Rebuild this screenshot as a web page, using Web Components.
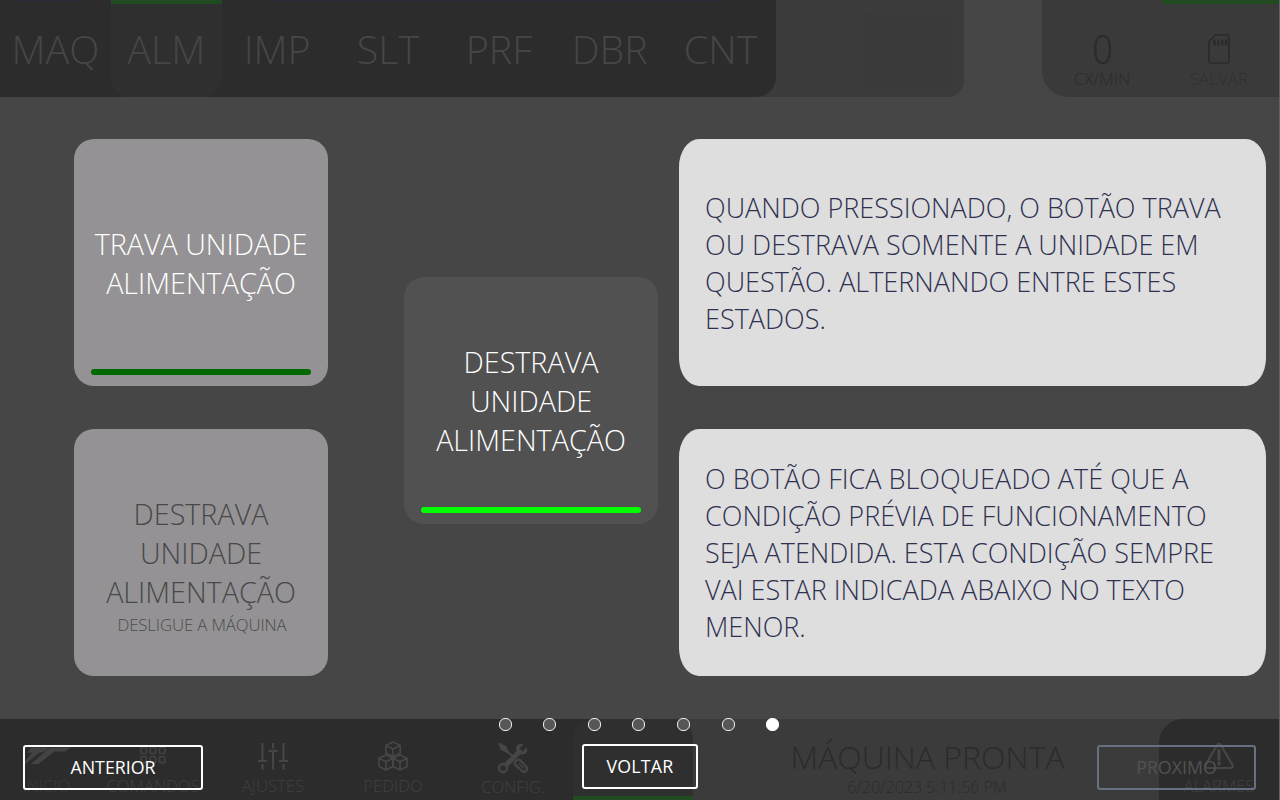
<!DOCTYPE html>
<html lang="pt-BR">
<head>
<meta charset="utf-8">
<title>Ajuda - Alimentação</title>
<style>
html, body { margin: 0; height: 100%; background: #464646; overflow: hidden; }
body { font-family: "Open Sans", "Noto Sans", sans-serif; font-weight: 300; }
</style>
</head>
<body>
<hmi-app></hmi-app>
<script>
function define(name, html, setup) {
  const tpl = document.createElement('template');
  tpl.innerHTML = html;
  customElements.define(name, class extends HTMLElement {
    constructor() {
      super();
      this.attachShadow({ mode: 'open' }).append(tpl.content.cloneNode(true));
    }
    connectedCallback() { if (setup) setup(this, this.shadowRoot); }
  });
}

/* Line icons used in the bars */
const ICONS = {
  logo: [50, 30, '<g fill="#434343"><path d="M9 6.500H27.500L20.500 11.500H17.500L3.500 23H0.500L10.500 11.500L5 12Z"/><path d="M28.500 6.500H49L43 10.500H32.500L16.500 23H9L25 9Z"/></g>'],
  grid: [26, 30, '<g fill="none" stroke="#414141" stroke-width="1.700"><rect x="1" y="6.500" width="5.500" height="6" rx="1"/><rect x="10.200" y="6.500" width="5.500" height="6" rx="1"/><rect x="19.400" y="6.500" width="5.500" height="6" rx="1"/><rect x="1" y="15.700" width="5.500" height="6" rx="1"/><rect x="10.200" y="15.700" width="5.500" height="6" rx="1"/><rect x="19.400" y="15.700" width="5.500" height="6" rx="1"/></g>'],
  sliders: [30, 30, '<g fill="none" stroke="#464646" stroke-width="2"><path d="M4.500 2V20M0 20H9M4.500 23V28.500M15 2V7.500M10.500 10H19.500M15 10V28.500M25.500 2V20M21 20H30M25.500 23V28.500"/></g>'],
  cubes: [30, 30, '<g fill="none" stroke="#464646" stroke-width="1.700" stroke-linejoin="round"><path d="M15 1L22.200 4.500V12L15 15.500L7.800 12V4.500ZM7.800 4.500L15 8L22.200 4.500M15 8V15.500"/><path d="M8 14L15 17.200V25.500L8 29L1 25.500V17.200ZM1 17.200L8 20.700L15 17.200M8 20.700V29"/><path d="M22 14L29 17.200V25.500L22 29L15 25.500V17.200ZM15 17.200L22 20.700L29 17.200M22 20.700V29"/></g>'],
  tools: [32, 32, '<path d="M1.500 1.500L8.500 5L10.500 9.500L18 17" fill="none" stroke="#464646" stroke-width="2.200"/><path d="M1 1L8 4L11 10L9.500 11L4 8Z" fill="#464646"/><path d="M17.500 20.500L20.500 17.500L23.500 18.500L29.500 25Q31 27 29 29Q27 30.500 25 29L18.500 23Z" fill="none" stroke="#464646" stroke-width="2.200"/><path d="M22 21.500L27 26.500" stroke="#464646" stroke-width="1.500"/><path d="M8.500 23.500L23 9" stroke="#464646" stroke-width="5"/><path d="M29.800 5.500L25.500 9.300L22.500 6.500L26.500 2Q22 .8 19.800 4Q18.500 6 19.500 9L22.500 12Q26 13.500 29 11.200Q31 9 29.800 5.500Z" fill="#464646"/><circle cx="6" cy="26" r="4" fill="#2c2c2c" stroke="#464646" stroke-width="2.300"/>'],
  warning: [32, 30, '<path d="M16 2.500Q17 2.500 17.700 3.800L29.500 24Q30.500 26.800 27.500 27H4.500Q1.500 26.800 2.500 24L14.300 3.800Q15 2.500 16 2.500Z" fill="none" stroke="#464646" stroke-width="2.200"/><path d="M16 9.500V18.500" stroke="#464646" stroke-width="3" stroke-linecap="round"/><circle cx="16" cy="22.500" r="1.900" fill="#464646"/>'],
  card: [22, 30, '<path d="M7 1H19.500Q21 1 21 2.500V27.500Q21 29 19.500 29H2.500Q1 29 1 27.500V7.500Z" fill="none" stroke="#2b2b2b" stroke-width="1.700" stroke-linejoin="round"/><path d="M6.500 5.500V11.500M10.500 5.500V11.500M14.300 5.500V11.500M18 5.500V11.500" stroke="#2b2b2b" stroke-width="2.300"/>']
};

define('hmi-icon', `<style>:host{display:block}svg{display:block}</style>`, (el, root) => {
  const [w, h, body] = ICONS[el.getAttribute('name')];
  root.innerHTML += `<svg width="${w}" height="${h}" viewBox="0 0 ${w} ${h}">${body}</svg>`;
});

define('hmi-tab', `
<style>
:host { display: flex; flex: 1; justify-content: center; box-sizing: border-box; height: 97px; padding-top: 22px;
  font-size: 39.400px; line-height: 55px; color: #464646; border-radius: 0 0 20px 20px; }
:host([active]) { background: linear-gradient(#204a20 4px, #2f2f2f 4px); }
:host([mark]) { background: linear-gradient(#242a3a 1px, transparent 1px); border-radius: 0; }
:host([mark=first]) { background: linear-gradient(#242a3a, #242a3a) 18px 0 / 64px 1px no-repeat; }
:host([mark=last]) { background: linear-gradient(#242a3a, #242a3a) 0 0 / 56px 1px no-repeat; }
:host([mark=start]) { background: linear-gradient(#242a3a, #242a3a) 53px 0 / 58px 1px no-repeat; }
</style><slot></slot>`);

define('hmi-header', `
<style>
:host { display: grid; grid-template-columns: 964px 1fr 237px; height: 97px; }
.left { display: grid; grid-template-columns: 776px 1fr; background: #3b3b3b; border-radius: 0 0 16px 0; }
.tabs { display: flex; background: #2c2c2c; border-radius: 0 0 20px 0; }
.display { margin: 14px 10px 8px 88px; background: linear-gradient(90deg, #3a3a3a, #393939 6px, #3b3b3b 16px, #3a3a3a 18px); }
.right { grid-column: 3; display: grid; grid-template-columns: 120px 1fr; background: linear-gradient(#204a20, #204a20) 120px 0 / 117px 4px no-repeat #3a3a3a; border-radius: 0 0 0 26px; text-align: center; }
.cell { display: flex; flex-direction: column; align-items: center; color: #2b2b2b; font-size: 17px; line-height: 23px; }
.num { font-size: 40px; line-height: 37px; height: 37px; margin-top: 30px; transform: scaleX(.9); -webkit-text-stroke: .4px #2b2b2b; }
.save { color: #303030; }
.save hmi-icon { margin: 34px 4px 3px 0; }
.save span { margin-right: 3px; }
</style>
<div class="left">
  <div class="tabs">
    <hmi-tab mark="first">MAQ</hmi-tab><hmi-tab active>ALM</hmi-tab><hmi-tab mark="start">IMP</hmi-tab><hmi-tab mark>SLT</hmi-tab><hmi-tab mark>PRF</hmi-tab><hmi-tab mark>DBR</hmi-tab><hmi-tab mark="last">CNT</hmi-tab>
  </div>
  <div class="display"></div>
</div>
<div class="right">
  <div class="cell"><div class="num">0</div><span>CX/MIN</span></div>
  <div class="cell save"><hmi-icon name="card"></hmi-icon><span>SALVAR</span></div>
</div>`);

define('hmi-command', `
<style>
:host { display: grid; grid-template-rows: 1fr auto 1fr; justify-items: center; width: 254px; height: 247px; border-radius: 20px;
  background: #949294; color: #fff; font-size: 28.700px; line-height: 39px; text-align: center; --bar: #006a00; }
:host([tone=dark]) { background: #515151; --bar: #00ff00; }
:host([disabled]) { color: #484848; --bar: transparent; }
.label { grid-row: 2; white-space: pre-line; }
.foot { grid-row: 3; display: flex; flex-direction: column; justify-content: space-between; align-items: center; }
.note { padding: 2px 0 0 2px; font-size: 16.800px; line-height: 23px; letter-spacing: -.12px; color: #4c4c4c; }
.bar { width: 220px; height: 6px; margin-bottom: 11px; border-radius: 3px; background: var(--bar); }
</style>
<div class="label"><slot></slot></div>
<div class="foot"><div class="note"><slot name="note"></slot></div><div class="bar"></div></div>`);

define('hmi-note', `
<style>
:host { display: flex; align-items: center; box-sizing: border-box; height: 247px; padding-left: 26px; border-radius: 20px / 28px;
  background: #dedede; color: #2f3150; font-size: 27px; line-height: 37px; white-space: nowrap; }
</style><div><slot></slot></div>`);

define('hmi-help', `
<style>
:host { display: grid; grid-template-columns: 254px 254px 587px; padding: 42px 0 0 74px; align-items: start; }
.col { display: grid; row-gap: 43px; }
:host { grid-template-columns: 330px 275px 587px; }
.mid { margin-top: 138px; }
</style>
<div class="col">
  <hmi-command>TRAVA UNIDADE<br>ALIMENTAÇÃO</hmi-command>
  <hmi-command disabled>DESTRAVA<br>UNIDADE<br>ALIMENTAÇÃO<span slot="note">DESLIGUE A MÁQUINA</span></hmi-command>
</div>
<hmi-command class="mid" tone="dark">DESTRAVA<br>UNIDADE<br>ALIMENTAÇÃO</hmi-command>
<div class="col">
  <hmi-note>QUANDO PRESSIONADO, O BOTÃO TRAVA<br>OU DESTRAVA SOMENTE A UNIDADE EM<br>QUESTÃO. ALTERNANDO ENTRE ESTES<br>ESTADOS.</hmi-note>
  <hmi-note>O BOTÃO FICA BLOQUEADO ATÉ QUE A<br>CONDIÇÃO PRÉVIA DE FUNCIONAMENTO<br>SEJA ATENDIDA. ESTA CONDIÇÃO SEMPRE<br>VAI ESTAR INDICADA ABAIXO NO TEXTO<br>MENOR.</hmi-note>
</div>`);

define('hmi-nav', `
<style>
:host { display: flex; flex-direction: column; align-items: center; justify-content: flex-end; width: 120px; height: 81px; box-sizing: border-box; padding-bottom: 3px;
  color: #404040; font-size: 16.700px; line-height: 23px; }
:host([active]) { background: linear-gradient(#2f2f2f 77px, #204a20 77px); border-radius: 20px 20px 0 0; }
.ic { height: 33px; }
</style>
<div class="ic"><slot name="icon"></slot></div><span><slot></slot></span>`);

define('hmi-footer', `
<style>
:host { display: grid; grid-template-columns: 693px 1fr 120px; height: 81px; background: #3b3b3b; }
nav { display: flex; background: linear-gradient(90deg, #2c2c2c 660px, #3b3b3b 660px); }
nav hmi-nav:first-child { width: 93px; color: #3a3a3a; }
nav hmi-nav:nth-child(5) { padding-bottom: 2px; }
.status { display: flex; flex-direction: column; align-items: center; color: #2b2b2b; }
.title { margin-top: 16px; font-size: 32px; line-height: 44px; height: 41px; margin-left: 3px; }
.date { font-size: 16px; line-height: 22px; margin-left: 2px; }
.alarm { background: #2c2c2c; border-radius: 24px 0 0 0; }
</style>
<nav>
  <hmi-nav><hmi-icon slot="icon" name="logo"></hmi-icon>INICIO</hmi-nav>
  <hmi-nav><hmi-icon slot="icon" name="grid"></hmi-icon>COMANDOS</hmi-nav>
  <hmi-nav><hmi-icon slot="icon" name="sliders"></hmi-icon>AJUSTES</hmi-nav>
  <hmi-nav><hmi-icon slot="icon" name="cubes"></hmi-icon>PEDIDO</hmi-nav>
  <hmi-nav><hmi-icon slot="icon" name="tools"></hmi-icon>CONFIG.</hmi-nav>
  <hmi-nav active></hmi-nav>
</nav>
<div class="status"><div class="title">MÁQUINA PRONTA</div><div class="date">6/20/2023 5:11:56 PM</div></div>
<hmi-nav class="alarm"><hmi-icon slot="icon" name="warning"></hmi-icon>ALARMES</hmi-nav>`);

define('hmi-outline', `
<style>
:host { display: flex; align-items: center; justify-content: center; box-sizing: border-box; height: 45px; padding-bottom: 2px; border: 2px solid #fff; border-radius: 3px;
  color: #fff; font-size: 17.800px; font-weight: 400; line-height: 24px; }
:host([disabled]) { border-color: #667080; color: #525252; }
</style><slot></slot>`);

define('hmi-dots', `
<style>
:host { display: flex; justify-content: space-between; width: 281px; height: 13px; }
i { box-sizing: border-box; width: 13px; height: 13px; border-radius: 6px; border: 1.300px solid #f0f0f0; background: #565856; }
i:last-child { background: #fff; border-color: #fff; }
</style><i></i><i></i><i></i><i></i><i></i><i></i><i></i>`);

define('hmi-app', `
<style>
:host { display: grid; grid-template-columns: 100%; grid-template-rows: 97px 622px 81px; position: relative; box-sizing: border-box; width: 1280px; height: 800px; border-right: 1px solid #5d626b; background: #464646; overflow: hidden; }
hmi-dots, hmi-outline { position: absolute; }
hmi-dots { left: 498.500px; top: 718px; }
.prev { left: 23px; top: 745px; width: 180px; }
.back { left: 582px; top: 744px; width: 116px; letter-spacing: .2px; }
.next { left: 1097px; top: 745px; width: 159px; }
</style>
<hmi-header></hmi-header>
<hmi-help></hmi-help>
<hmi-footer></hmi-footer>
<hmi-dots></hmi-dots>
<hmi-outline class="prev">ANTERIOR</hmi-outline>
<hmi-outline class="back">VOLTAR</hmi-outline>
<hmi-outline class="next" disabled>PROXIMO</hmi-outline>`);
</script>
</body>
</html>
